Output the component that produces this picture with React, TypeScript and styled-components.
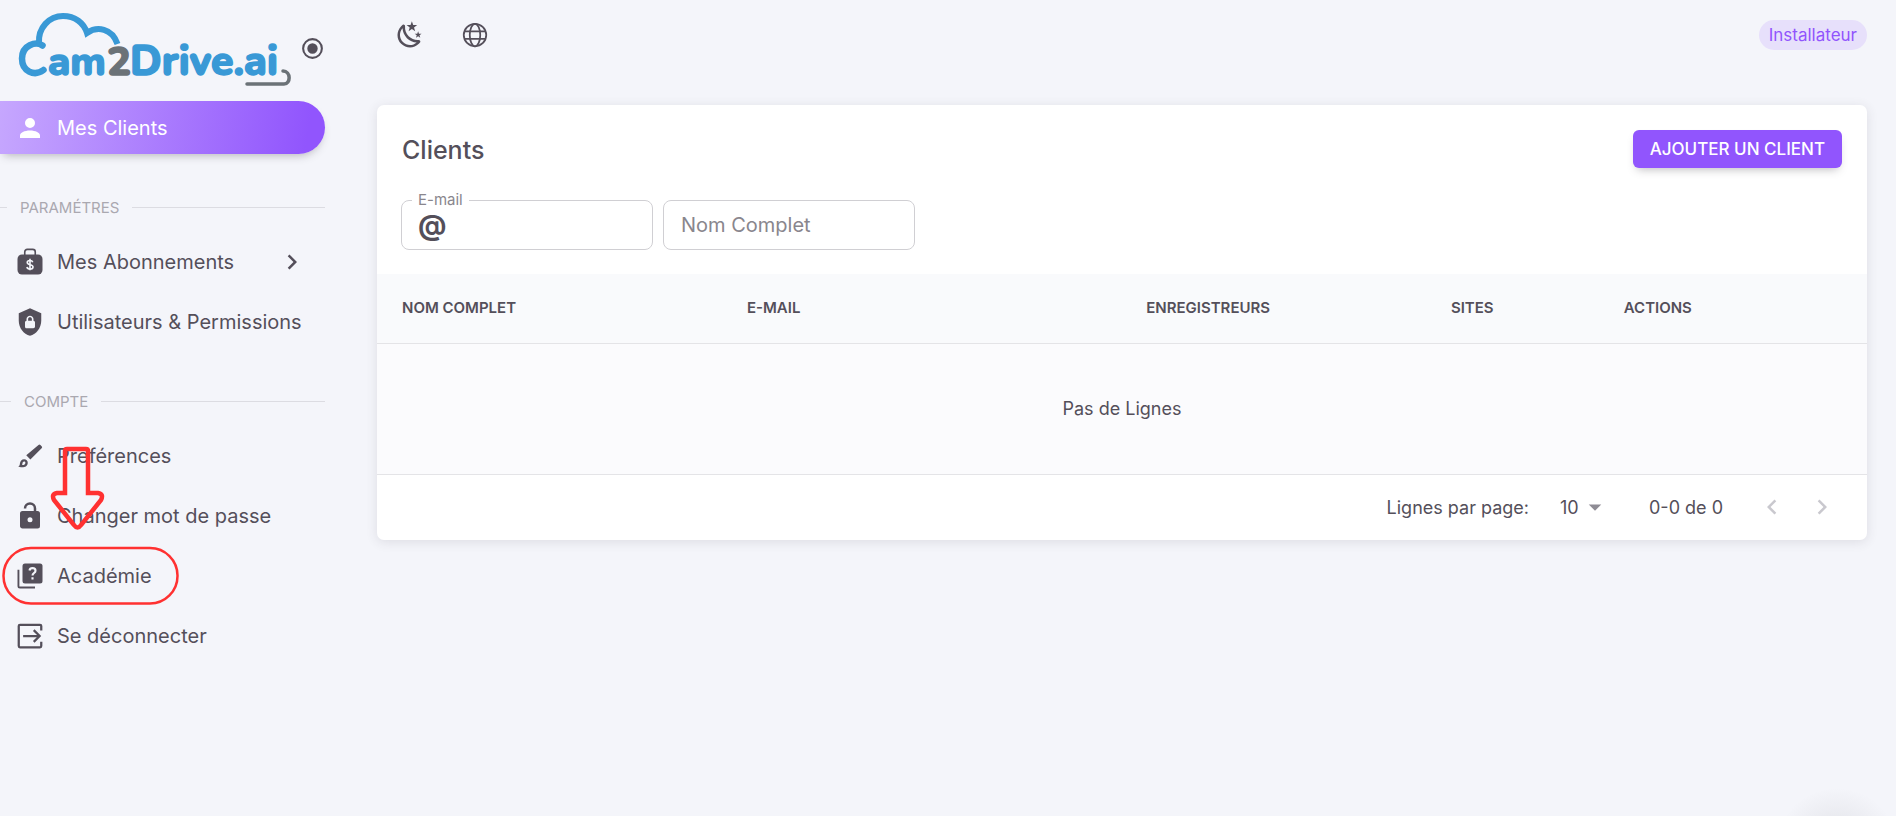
import React from 'react';
import styled, { createGlobalStyle } from 'styled-components';

const Global = createGlobalStyle`
  *, *::before, *::after { box-sizing: border-box; }
  body { margin: 0; background: #f4f5fa; color: #544f5a; font-family: Inter, "Liberation Sans", sans-serif; }
  button, input, select { font: inherit; color: inherit; }
`;

const Page = styled.div`
  display: grid;
  grid-template-columns: 325px minmax(0, 1fr);
  min-height: 100vh;
  position: relative;
  overflow: hidden;
`;

const Sidebar = styled.aside`
  display: flex;
  flex-direction: column;
`;

const Brand = styled.div`
  display: flex;
  align-items: center;
  height: 101px;
  padding: 0 0 4px 18px;
`;

const Logo = styled.svg`
  display: block;
  width: 282px;
  height: 88px;
  flex: none;
`;

const IconButton = styled.button`
  display: grid;
  place-items: center;
  padding: 0;
  border: 0;
  background: none;
`;

const Icon = styled.svg<{ $size: number }>`
  display: block;
  flex: none;
  width: ${(p) => p.$size}px;
  height: ${(p) => p.$size}px;
  fill: currentColor;
`;

const Nav = styled.nav`
  display: flex;
  flex-direction: column;
`;

const NavList = styled.ul`
  list-style: none;
  margin: 0;
  padding: 0;
  display: grid;
  gap: 8px;
`;

const NavLink = styled.a<{ $active?: boolean }>`
  display: flex;
  align-items: center;
  gap: 12px;
  height: ${(p) => (p.$active ? 53 : 52)}px;
  padding: 0 18px 0 15px;
  border-radius: 0 27px 27px 0;
  font-size: 20px;
  white-space: nowrap;
  text-decoration: none;
  color: ${(p) => (p.$active ? '#fff' : '#544f5a')};
  background: ${(p) => (p.$active ? 'linear-gradient(98deg, #c6a7fe, #9155fd 94%)' : 'none')};
  box-shadow: ${(p) => (p.$active ? '0 5px 10px -4px rgba(58, 53, 65, 0.36)' : 'none')};
  & > span { flex: 1; }
`;

const SectionTitle = styled.h2<{ $lead: number }>`
  display: flex;
  align-items: center;
  gap: 13px;
  height: 30px;
  margin: 38px 0 14px;
  font-size: 15px;
  font-weight: 400;
  color: #aaa8b0;
  &::before { content: ''; width: ${(p) => p.$lead}px; height: 1px; background: #dcdce2; }
  &::after { content: ''; flex: 1; height: 1px; background: #dcdce2; }
`;

const Main = styled.main`
  padding: 0 29px 0 52px;
`;

const TopBar = styled.header`
  display: flex;
  align-items: center;
  gap: 35px;
  height: 70px;
  padding-left: 18px;
  margin-bottom: 35px;
`;

const RoleChip = styled.span`
  margin-left: auto;
  padding: 0 10px;
  border-radius: 15px;
  font-size: 17px;
  line-height: 30px;
  color: #9155fd;
  background: #e7e0fb;
`;

const Card = styled.section`
  border-radius: 7px;
  background: #fff;
  box-shadow: 0 2px 12px rgba(58, 53, 65, 0.12);
  overflow: hidden;
`;

const CardHead = styled.div`
  display: flex;
  align-items: flex-start;
  justify-content: space-between;
  padding: 25px 25px 0;
`;

const Title = styled.h1`
  margin: 0;
  font-size: 25px;
  font-weight: 500;
  line-height: 40px;
`;

const AddButton = styled.button`
  height: 38px;
  padding: 0 17px;
  border: 0;
  border-radius: 6px;
  font-size: 17px;
  font-weight: 500;
  color: #fff;
  background: #9155fd;
  box-shadow: 0 5px 10px -4px rgba(58, 53, 65, 0.36);
`;

const Filters = styled.div`
  display: flex;
  gap: 10px;
  padding: 20px 24px 24px;
`;

const Field = styled.fieldset`
  width: 252px;
  height: 60px;
  min-width: 0;
  margin: 0;
  padding: 0 16px 10px;
  border: 1px solid #d0cfd3;
  border-radius: 8px;
  display: flex;
  align-items: center;
`;

const FieldLegend = styled.legend`
  height: 20px;
  margin-left: -6px;
  padding: 0 6px;
  font-size: 15px;
  line-height: 20px;
  color: #89868d;
`;

const PlainField = styled.label`
  width: 252px;
  height: 50px;
  margin-top: 10px;
  border: 1px solid #d0cfd3;
  border-radius: 8px;
  display: flex;
`;

const TextInput = styled.input`
  width: 100%;
  min-width: 0;
  padding: 0 17px;
  border: 0;
  outline: 0;
  background: none;
  font-size: 20px;
  &::placeholder { color: #89868d; opacity: 1; }
`;

const AtSign = styled.span`
  font-size: 28px;
  font-weight: 700;
  line-height: 30px;
`;

const Table = styled.table`
  width: 100%;
  border-collapse: collapse;
  table-layout: fixed;
`;

const HeadCell = styled.th`
  height: 69px;
  padding: 0 0 2px 25px;
  border-bottom: 1px solid #e4e4e7;
  text-align: left;
  font-size: 15px;
  font-weight: 600;
  background: #f9fafc;
`;

const EmptyCell = styled.td`
  height: 131px;
  padding: 0;
  border-bottom: 1px solid #e4e4e7;
  text-align: center;
  font-size: 18px;
  background: #fbfbfd;
`;

const Pager = styled.div`
  display: flex;
  align-items: center;
  justify-content: flex-end;
  height: 65px;
  padding-right: 30px;
  font-size: 18px;
`;

const PageSize = styled.label`
  display: flex;
  align-items: center;
  gap: 31px;
`;

const SelectBox = styled.span`
  display: flex;
  align-items: center;
`;

const Select = styled.select`
  appearance: none;
  border: 0;
  padding: 0;
  width: 20px;
  background: none;
`;

const Range = styled.span`
  margin: 0 34px 0 39px;
`;

const Arrows = styled.div`
  display: flex;
  gap: 20px;
  color: #c9c8ce;
`;

const Caret = styled(Icon)`
  color: #8f8c95;
  pointer-events: none;
`;

const Callout = styled.svg`
  position: absolute;
  left: 0;
  top: 440px;
  width: 190px;
  height: 170px;
  fill: none;
  stroke: #ff3131;
  pointer-events: none;
`;

const Glow = styled.div`
  position: absolute;
  right: 1px;
  bottom: -76px;
  width: 116px;
  height: 104px;
  border-radius: 50%;
  background: radial-gradient(closest-side, rgba(60, 60, 70, 0.1), rgba(60, 60, 70, 0));
  pointer-events: none;
`;

const paths = {
  radio: 'M12,20A8,8 0 0,1 4,12A8,8 0 0,1 12,4A8,8 0 0,1 20,12A8,8 0 0,1 12,20M12,2A10,10 0 0,0 2,12A10,10 0 0,0 12,22A10,10 0 0,0 22,12A10,10 0 0,0 12,2M12,7A5,5 0 0,0 7,12A5,5 0 0,0 12,17A5,5 0 0,0 17,12A5,5 0 0,0 12,7Z',
  shield: 'M12,1L3,5V11C3,16.55 6.84,21.74 12,23C17.16,21.74 21,16.55 21,11V5L12,1M12,7C13.4,7 14.8,8.1 14.8,9.5V11C15.4,11 16,11.6 16,12.3V15.8C16,16.4 15.4,17 14.7,17H9.2C8.6,17 8,16.4 8,15.7V12.2C8,11.6 8.6,11 9.2,11V9.5C9.2,8.1 10.6,7 12,7M12,8.2C11.2,8.2 10.5,8.7 10.5,9.5V11H13.5V9.5C13.5,8.7 12.8,8.2 12,8.2Z',
  night: 'M17.75,4.09L15.22,6.03L16.13,9.09L13.5,7.28L10.87,9.09L11.78,6.03L9.25,4.09L12.44,4L13.5,1L14.56,4L17.75,4.09M21.25,11L19.61,12.25L20.2,14.23L18.5,13.06L16.8,14.23L17.39,12.25L15.75,11L17.81,10.95L18.5,9L19.19,10.95L21.25,11M18.97,15.95C19.8,15.87 20.69,17.05 20.16,17.8C19.84,18.25 19.5,18.67 19.08,19.07C15.17,23 8.84,23 4.94,19.07C1.03,15.17 1.03,8.83 4.94,4.93C5.34,4.53 5.76,4.17 6.21,3.85C6.96,3.32 8.14,4.21 8.06,5.04C7.79,7.9 8.75,10.87 10.95,13.06C13.14,15.26 16.1,16.22 18.97,15.95M17.33,17.97C14.5,17.81 11.7,16.64 9.53,14.5C7.36,12.31 6.2,9.5 6.04,6.68C3.23,9.82 3.34,14.64 6.35,17.66C9.37,20.67 14.19,20.78 17.33,17.97Z',
  right: 'M10,6L8.59,7.41L13.17,12L8.59,16.59L10,18L16,12L10,6Z',
  left: 'M15.41,7.41L14,6L8,12L14,18L15.41,16.59L10.83,12L15.41,7.41Z',
  lockOpen: 'M18,8A2,2 0 0,1 20,10V20A2,2 0 0,1 18,22H6C4.89,22 4,21.1 4,20V10A2,2 0 0,1 6,8H15V6A3,3 0 0,0 12,3A3,3 0 0,0 9,6H7A5,5 0 0,1 12,1A5,5 0 0,1 17,6V8H18M12,17A2,2 0 0,0 14,15A2,2 0 0,0 12,13A2,2 0 0,0 10,15A2,2 0 0,0 12,17Z',
  person: 'M12,4A4,4 0 0,1 16,8A4,4 0 0,1 12,12A4,4 0 0,1 8,8A4,4 0 0,1 12,4M12,14C16.42,14 20,15.79 20,18V20H4V18C4,15.79 7.58,14 12,14Z',
  caret: 'M7,10L12,15L17,10H7Z',
};

const Glyph = ({ d, size = 30 }: { d: string; size?: number }) => (
  <Icon $size={size} viewBox="0 0 24 24" aria-hidden="true"><path d={d} /></Icon>
);

const BagIcon = () => (
  <Icon $size={30} viewBox="0 0 24 24" aria-hidden="true">
    <path d="M7.800 6.500V3.900a2 2 0 0 1 2-2h4.400a2 2 0 0 1 2 2v2.600" fill="none" stroke="currentColor" strokeWidth="1.300" />
    <rect x="2" y="6" width="20" height="16" rx="3.600" />
    <path d="M14.200 12.200c-.3-1-1.100-1.400-2.200-1.400-1.300 0-2.200.6-2.200 1.600 0 2.400 4.600 1.200 4.600 3.500 0 1.100-1 1.700-2.400 1.700-1.300 0-2.200-.6-2.500-1.600M12 9.400v9.200" fill="none" stroke="#f4f5fa" strokeWidth="1.300" />
  </Icon>
);

const BrushIcon = () => (
  <Icon $size={30} viewBox="0 0 24 24" aria-hidden="true">
    <path d="M18.800 3.200a1 1 0 0 1 1.500 0l1 1a1 1 0 0 1 0 1.500L12.300 14.700 9 11.400z" />
    <path
      fillRule="evenodd"
      d="M2.600 20.200c1-.3 1.200-1.100 1.300-2.100.2-2.200 1.500-3.600 3.400-3.600 1.700 0 2.900 1.200 2.900 2.800 0 2.400-1.900 3.700-4.600 3.700-1.200 0-2.300-.2-3-.8zM5.600 19.200c1.600.1 2.700-.6 2.700-1.900 0-.6-.4-1-1-1-.9 0-1.300.8-1.400 1.800 0 .4-.1.800-.3 1.100z"
    />
  </Icon>
);

const HelpIcon = () => (
  <Icon $size={30} viewBox="0 0 24 24" aria-hidden="true">
    <path d="M3.500 7H2v13a2 2 0 0 0 2 2h12v-1.600H3.500z" />
    <rect x="6" y="2" width="16" height="16" rx="2" />
    <path d="M11.600 7.600c.2-1.200 1-1.900 2.400-1.900s2.400.8 2.400 2c0 1.900-2.400 1.900-2.400 3.900M14 12.900v1.900" fill="none" stroke="#f4f5fa" strokeWidth="1.700" />
  </Icon>
);

const ExitIcon = () => (
  <Icon $size={30} viewBox="0 0 24 24" aria-hidden="true">
    <path d="M21 7.500V4a1 1 0 0 0-1-1H4a1 1 0 0 0-1 1v16a1 1 0 0 0 1 1h16a1 1 0 0 0 1-1v-3.500M6.500 12h13M15 7.300l4.700 4.700-4.700 4.700" fill="none" stroke="currentColor" strokeWidth="1.800" />
  </Icon>
);

const GlobeIcon = () => (
  <Icon $size={30} viewBox="0 0 24 24" aria-hidden="true">
    <g fill="none" stroke="currentColor" strokeWidth="1.400">
      <circle cx="12" cy="12" r="9" />
      <ellipse cx="12" cy="12" rx="4.200" ry="9" />
      <path d="M3.500 9h17M3.500 15h17" />
    </g>
  </Icon>
);

const BrandLogo = () => (
  <Logo viewBox="18 4 282 88" role="img" aria-label="Cam2Drive.ai">
    <g fill="none" stroke="#3999d6" strokeLinecap="round">
      <path d="M42.500 44.500C36 40 22 44 22 57.500C22 70 34 76 43.500 69" strokeWidth="6.500" />
      <path d="M39 42C38 27 49 15 63 15C75 15 84 22 87 32C97 25 112 27 117.500 43" strokeWidth="6" strokeLinecap="butt" />
    </g>
    <g fontFamily="Baloo, Nunito, 'Open Sans', sans-serif" fontWeight="800" fontSize="40" fill="#3999d6" stroke="#3999d6" strokeWidth="1.400" strokeLinejoin="round">
      <text x="48" y="74">am</text>
      <text x="107" y="74" fill="#6b7277" stroke="#6b7277">2</text>
      <text x="130" y="74" fontSize="41">Drive.ai</text>
    </g>
    <path d="M247 83H284C291 83 291 70 283 70" fill="none" stroke="#6b7277" strokeWidth="3.500" strokeLinecap="round" />
  </Logo>
);

const NavItem = ({ icon, label, active, more }: { icon: React.ReactNode; label: string; active?: boolean; more?: boolean }) => (
  <li>
    <NavLink href="#" $active={active}>
      {icon}
      <span>{label}</span>
      {more && <Glyph d={paths.right} />}
    </NavLink>
  </li>
);

const columns = [
  { label: 'NOM COMPLET', width: '23.15%' },
  { label: 'E-MAIL', width: '26.8%' },
  { label: 'ENREGISTREURS', width: '20.45%' },
  { label: 'SITES', width: '11.6%' },
  { label: 'ACTIONS', width: '18%' },
];

export default function App() {
  return (
    <>
      <Global />
      <Page>
        <Sidebar>
          <Brand>
            <BrandLogo />
            <IconButton aria-label="Réduire le menu"><Glyph d={paths.radio} size={25} /></IconButton>
          </Brand>
          <Nav>
            <NavList>
              <NavItem icon={<Glyph d={paths.person} />} label="Mes Clients" active />
            </NavList>
            <SectionTitle $lead={7}>PARAMÉTRES</SectionTitle>
            <NavList>
              <NavItem icon={<BagIcon />} label="Mes Abonnements" more />
              <NavItem icon={<Glyph d={paths.shield} />} label="Utilisateurs & Permissions" />
            </NavList>
            <SectionTitle $lead={11}>COMPTE</SectionTitle>
            <NavList>
              <NavItem icon={<BrushIcon />} label="Préférences" />
              <NavItem icon={<Glyph d={paths.lockOpen} />} label="Changer mot de passe" />
              <NavItem icon={<HelpIcon />} label="Académie" />
              <NavItem icon={<ExitIcon />} label="Se déconnecter" />
            </NavList>
          </Nav>
        </Sidebar>
        <Main>
          <TopBar>
            <IconButton aria-label="Mode sombre"><Glyph d={paths.night} /></IconButton>
            <IconButton aria-label="Langue"><GlobeIcon /></IconButton>
            <RoleChip>Installateur</RoleChip>
          </TopBar>
          <Card>
            <CardHead>
              <Title>Clients</Title>
              <AddButton>AJOUTER UN CLIENT</AddButton>
            </CardHead>
            <Filters>
              <Field>
                <FieldLegend><label htmlFor="email">E-mail</label></FieldLegend>
                <AtSign>@</AtSign>
                <TextInput id="email" type="email" />
              </Field>
              <PlainField>
                <TextInput type="text" aria-label="Nom Complet" placeholder="Nom Complet" />
              </PlainField>
            </Filters>
            <Table>
              <colgroup>{columns.map((c) => <col key={c.label} width={c.width} />)}</colgroup>
              <thead>
                <tr>{columns.map((c) => <HeadCell key={c.label} scope="col">{c.label}</HeadCell>)}</tr>
              </thead>
              <tbody>
                <tr><EmptyCell colSpan={5}>Pas de Lignes</EmptyCell></tr>
              </tbody>
            </Table>
            <Pager>
              <PageSize>
                Lignes par page:
                <SelectBox>
                  <Select defaultValue="10"><option>10</option></Select>
                  <Caret $size={30} viewBox="0 0 24 24" aria-hidden="true"><path d={paths.caret} /></Caret>
                </SelectBox>
              </PageSize>
              <Range>0-0 de 0</Range>
              <Arrows>
                <IconButton aria-label="Page précédente" disabled><Glyph d={paths.left} /></IconButton>
                <IconButton aria-label="Page suivante" disabled><Glyph d={paths.right} /></IconButton>
              </Arrows>
            </Pager>
          </Card>
        </Main>
        <Callout viewBox="0 440 190 170" aria-hidden="true">
          <path d="M67 449H86Q88 449 88 451V493H98Q104 494 101 500L81 525Q77.500 530 74 525L54 500Q51 494 57 493H65V451Q65 449 67 449Z" strokeWidth="4.500" />
          <rect x="3.500" y="548" width="174" height="55.500" rx="27.500" strokeWidth="2.500" />
        </Callout>
        <Glow />
      </Page>
    </>
  );
}
